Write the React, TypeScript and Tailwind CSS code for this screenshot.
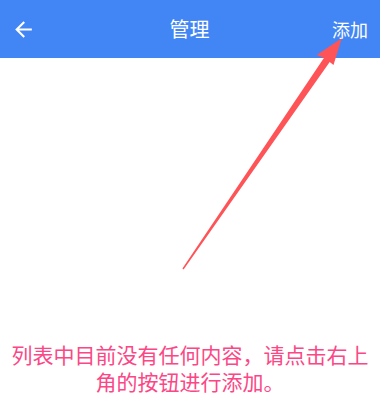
import React from 'react';

const font = { fontFamily: '"Noto Sans CJK SC", "Noto Sans", sans-serif' };

function BackIcon() {
  return (
    <svg viewBox="0 0 24 24" className="w-[25px] h-[25px]" fill="currentColor">
      <path d="M20 11H7.83l5.59-5.59L12 4l-8 8 8 8 1.41-1.41L7.83 13H20v-2z" />
    </svg>
  );
}

export default function App() {
  return (
    <div className="relative w-[380px] h-[396px] bg-white flex flex-col overflow-hidden" style={font}>
      {/* Toolbar */}
      <div className="h-[58px] shrink-0 bg-[#4286f5] text-white flex items-center justify-between pl-[11px] pr-[12px]">
        <button className="w-[36px] flex items-center text-white">
          <BackIcon />
        </button>
        <h1 className="text-[20px] leading-none font-normal">管理</h1>
        <button className="w-[36px] text-[18px] leading-none text-right">添加</button>
      </div>

      {/* Empty state */}
      <div className="flex-1 flex flex-col justify-end pb-[1px] px-1">
        <p className="text-[21px] leading-[27px] text-[#fb4786] text-center whitespace-nowrap">
          列表中目前没有任何内容，请点击右上
          <br />
          角的按钮进行添加。
        </p>
      </div>

      {/* Hint arrow pointing at the add button */}
      <svg className="absolute inset-0 pointer-events-none" width="380" height="396" viewBox="0 0 380 396">
        <polygon
          fill="#fe5457"
          points="182.4,268.6 323.9,58 316.7,55 341.7,38.3 333.5,65 329.7,62 183.6,269.4"
        />
      </svg>
    </div>
  );
}
